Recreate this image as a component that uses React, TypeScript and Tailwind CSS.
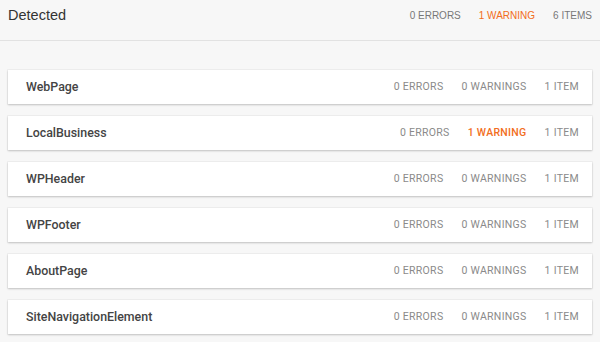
import React from 'react';

type Row = { name: string; errors: number; warnings: number; items: number };

const rows: Row[] = [
  { name: 'WebPage', errors: 0, warnings: 0, items: 1 },
  { name: 'LocalBusiness', errors: 0, warnings: 1, items: 1 },
  { name: 'WPHeader', errors: 0, warnings: 0, items: 1 },
  { name: 'WPFooter', errors: 0, warnings: 0, items: 1 },
  { name: 'AboutPage', errors: 0, warnings: 0, items: 1 },
  { name: 'SiteNavigationElement', errors: 0, warnings: 0, items: 1 },
];

export default function App() {
  return (
    <div className="w-[600px] h-[342px] overflow-hidden bg-[#f7f7f7]">
      <div className="h-[41px] flex items-center justify-between pl-[8px] pr-[8px] border-b border-[#e2e2e2] font-['Liberation_Sans',Arial,sans-serif]">
        <h1 className="text-[14.5px] text-[#333] pb-[9px]">Detected</h1>
        <div className="flex gap-[18px] text-[10px] text-[#777] pb-[9px]">
          <span>0 ERRORS</span>
          <span className="text-[#f26d21]">1 WARNING</span>
          <span>6 ITEMS</span>
        </div>
      </div>

      <div className="flex flex-col gap-[12px] pt-[29px] px-[8px] font-['Roboto',sans-serif]">
        {rows.map((r) => (
          <div
            key={r.name}
            className="h-[34px] bg-white flex items-center justify-between pl-[18px] pr-[13px] shadow-[0_1px_2px_rgba(0,0,0,0.2),0_0_0_1px_rgba(0,0,0,0.03)]"
          >
            <span className="text-[12.4px] font-medium text-[#444]">{r.name}</span>
            <div className="flex gap-[18px] text-[10.5px] tracking-[0.3px] text-[#8a8a8a]">
              <span>{r.errors} ERRORS</span>
              <span className={r.warnings > 0 ? 'text-[#f26d21] font-medium' : ''}>
                {r.warnings} {r.warnings === 1 ? 'WARNING' : 'WARNINGS'}
              </span>
              <span>{r.items} ITEM</span>
            </div>
          </div>
        ))}
      </div>
    </div>
  );
}
